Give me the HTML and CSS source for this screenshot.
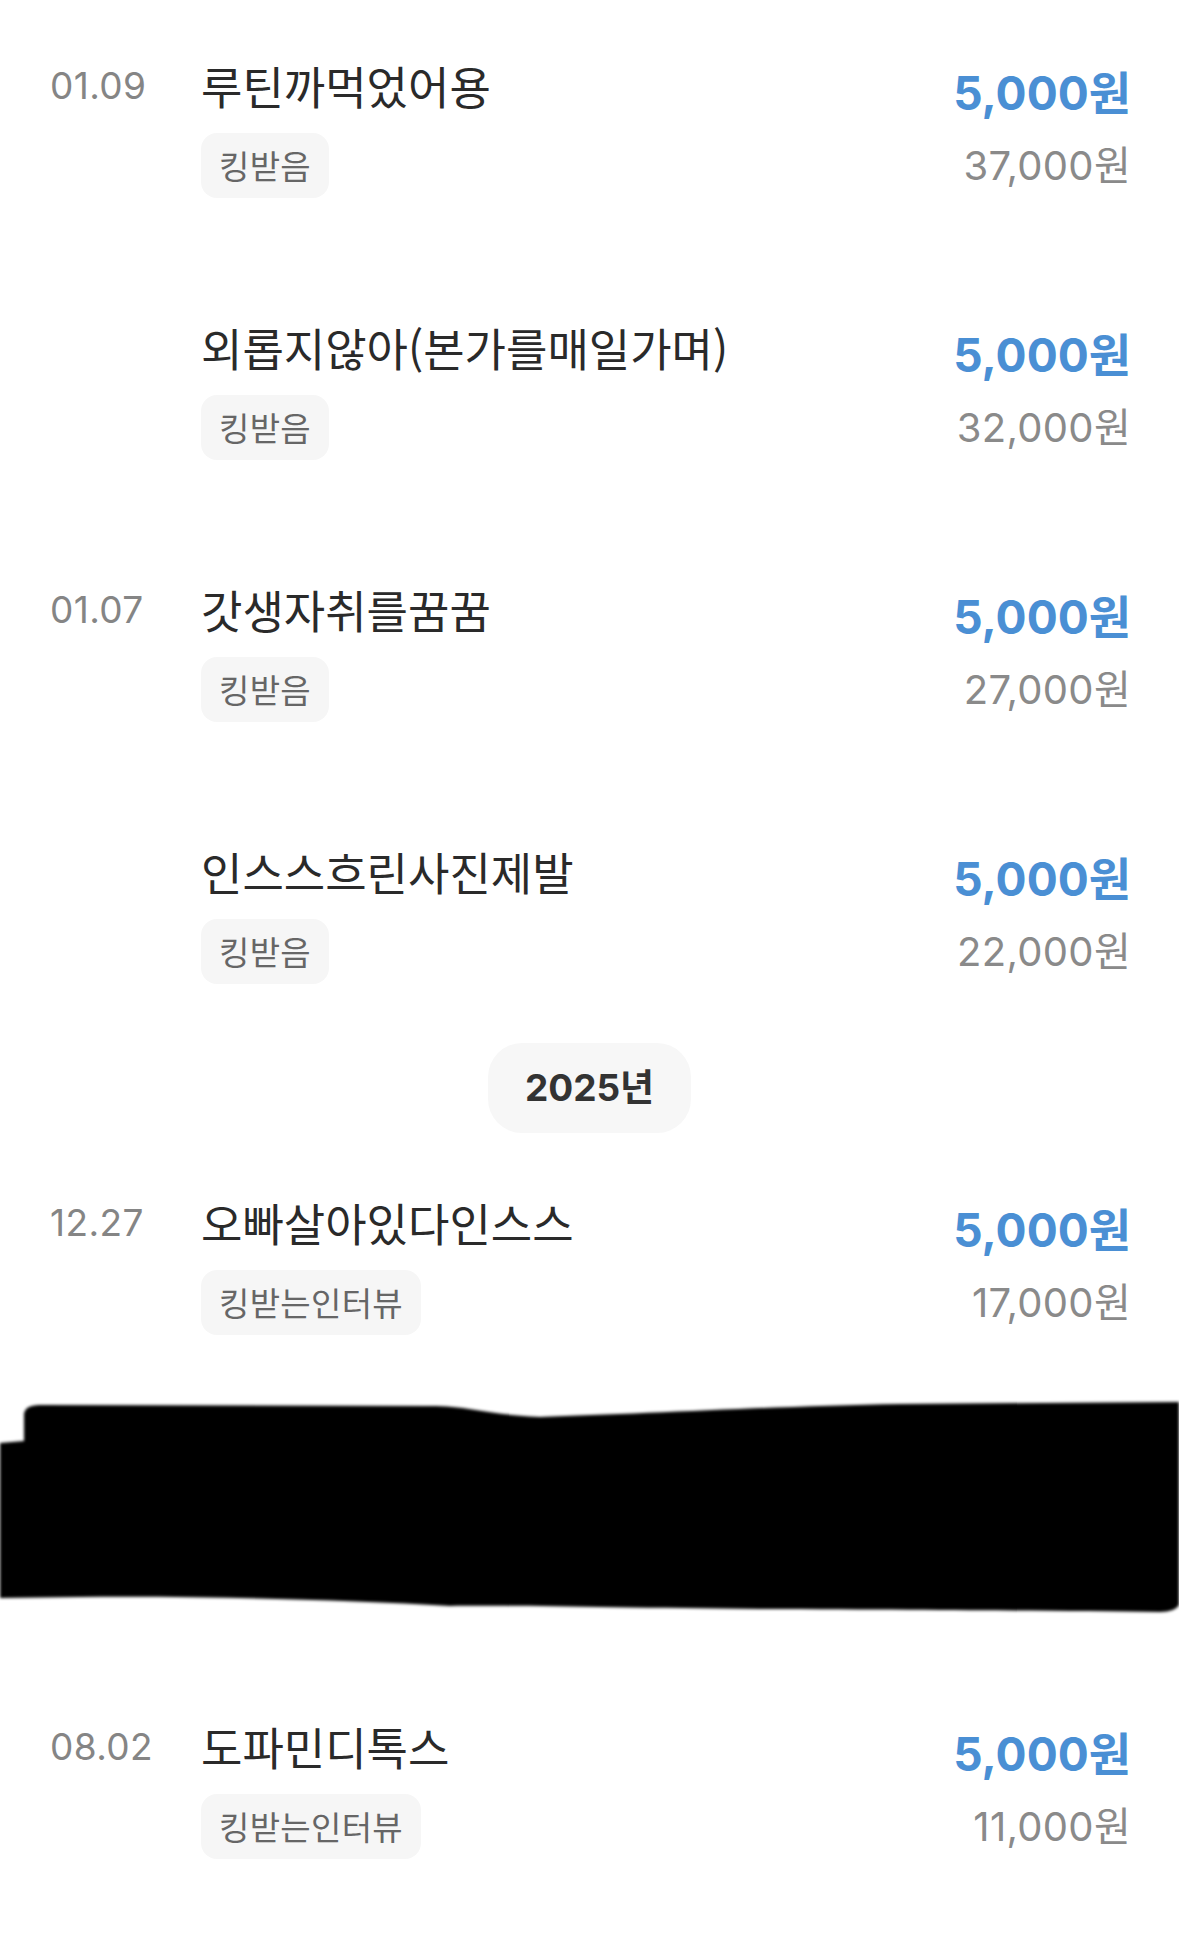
FILE: index.html
```html
<!DOCTYPE html>
<html lang="ko">
<head>
<meta charset="utf-8">
<title>내역</title>
<link rel="stylesheet" href="styles.css">
</head>
<body>
<main class="list">
  <div class="row">
    <div class="date">01.09</div>
    <div class="title">루틴까먹었어용</div>
    <div class="amount">5,000원</div>
    <div class="tag-cell"><span class="tag">킹받음</span></div>
    <div class="sub">37,000원</div>
  </div>
  <div class="row">
    <div class="date"></div>
    <div class="title">외롭지않아(본가를매일가며)</div>
    <div class="amount">5,000원</div>
    <div class="tag-cell"><span class="tag">킹받음</span></div>
    <div class="sub">32,000원</div>
  </div>
  <div class="row">
    <div class="date">01.07</div>
    <div class="title">갓생자취를꿈꿈</div>
    <div class="amount">5,000원</div>
    <div class="tag-cell"><span class="tag">킹받음</span></div>
    <div class="sub">27,000원</div>
  </div>
  <div class="row">
    <div class="date"></div>
    <div class="title">인스스흐린사진제발</div>
    <div class="amount">5,000원</div>
    <div class="tag-cell"><span class="tag">킹받음</span></div>
    <div class="sub">22,000원</div>
  </div>
  <div class="year"><span class="year-pill">2025년</span></div>
  <div class="row">
    <div class="date">12.27</div>
    <div class="title">오빠살아있다인스스</div>
    <div class="amount">5,000원</div>
    <div class="tag-cell"><span class="tag">킹받는인터뷰</span></div>
    <div class="sub">17,000원</div>
  </div>
  <div class="redacted">
    <svg class="scribble" viewBox="0 0 1179 262" preserveAspectRatio="none" aria-hidden="true">
      <defs>
        <filter id="soft" x="-2%" y="-5%" width="104%" height="110%">
          <feGaussianBlur stdDeviation="1.6"/>
        </filter>
      </defs>
      <path filter="url(#soft)" fill="#000" d="M24,16 Q24,6 40,6 L430,7 C470,7 490,16 540,18 C640,15 780,7 900,5 L1179,3 L1179,206 Q1175,213 1160,213 C1060,212 960,211 760,210 C620,209 520,206 450,207 C350,201 220,197 80,198 L0,199 L0,44 L24,42 Z"/>
    </svg>
  </div>
  <div class="row">
    <div class="date">08.02</div>
    <div class="title">도파민디톡스</div>
    <div class="amount">5,000원</div>
    <div class="tag-cell"><span class="tag">킹받는인터뷰</span></div>
    <div class="sub">11,000원</div>
  </div>
</main>
</body>
</html>
```
FILE: styles.css
```css
html, body {
  margin: 0;
  padding: 0;
  background: #ffffff;
}

body {
  font-family: Inter, "Noto Sans CJK KR", sans-serif;
}

.list {
  display: flex;
  flex-direction: column;
}

.row {
  display: grid;
  grid-template-columns: 151px 1fr auto;
  grid-template-rows: 52px 65px;
  row-gap: 21px;
  padding: 60px 48px 64px 50px;
}

.date {
  grid-column: 1;
  grid-row: 1;
  font-size: 37px;
  letter-spacing: 0.4px;
  line-height: 52px;
  color: #858585;
}

.title {
  grid-column: 2;
  grid-row: 1;
  font-family: "Noto Sans CJK KR", sans-serif;
  font-size: 45px;
  line-height: 52px;
  color: #2a2a2a;
  white-space: nowrap;
}

.tag-cell {
  grid-column: 2;
  grid-row: 2;
  display: flex;
  align-items: stretch;
}

.tag {
  display: block;
  height: 65px;
  line-height: 65px;
  padding: 0 18px;
  background: #f6f6f6;
  border-radius: 16px;
  font-family: "Noto Sans CJK KR", sans-serif;
  font-size: 33px;
  letter-spacing: 0.3px;
  color: #666666;
}

.amount {
  grid-column: 3;
  grid-row: 1;
  justify-self: end;
  margin-top: 7px;
  font-size: 46px;
  font-weight: 700;
  line-height: 52px;
  color: #4a8fd4;
  white-space: nowrap;
}

.sub {
  grid-column: 3;
  grid-row: 2;
  justify-self: end;
  font-size: 40px;
  letter-spacing: 0.3px;
  line-height: 65px;
  color: #8a8a8a;
  white-space: nowrap;
}

.year {
  display: flex;
  justify-content: center;
  margin: -5px 0 4px;
}

.year-pill {
  display: block;
  height: 90px;
  line-height: 90px;
  padding: 0 37px;
  border-radius: 34px;
  background: #f7f7f7;
  font-size: 37px;
  font-weight: 700;
  color: #333333;
}

.redacted {
  height: 262px;
}

.scribble {
  display: block;
  width: 100%;
  height: 262px;
}
```
